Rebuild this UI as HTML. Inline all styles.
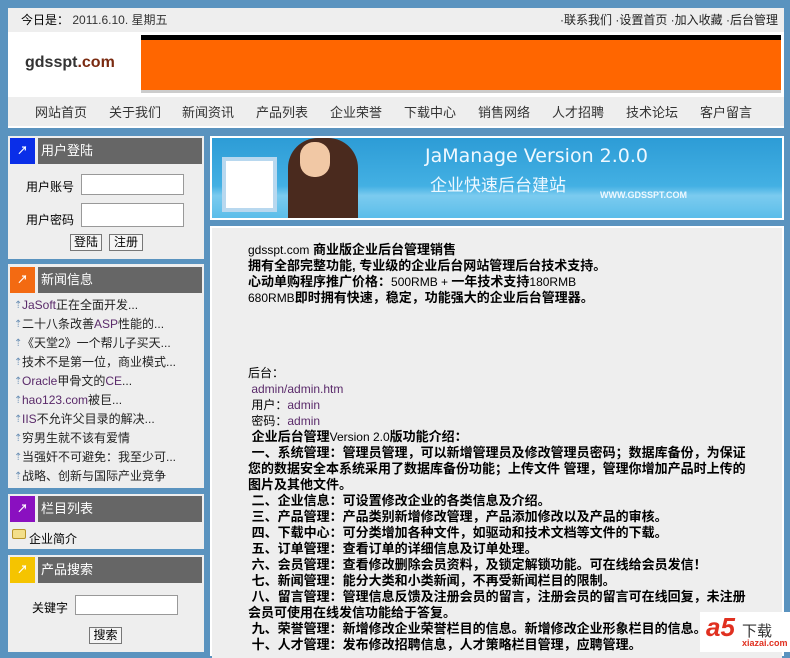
<!DOCTYPE html>
<html><head><meta charset="utf-8"><style>
*{margin:0;padding:0;box-sizing:border-box}
body{width:790px;height:652px;overflow:hidden;background:#5a93bf;font-family:"Liberation Sans","Noto Sans CJK SC",sans-serif;font-size:12px;color:#000;position:relative}
.a{position:absolute}
.panel{background:#eeeeee}
.hd{position:absolute;height:26px;left:2px;right:2px}
.hd .ic{position:absolute;left:0;top:0;width:25px;height:26px;color:#fff;font-size:11px;font-weight:bold;text-align:center;line-height:26px}
.hd .t{position:absolute;left:28px;right:0;top:0;height:26px;background:#666;color:#fff;font-size:13px;line-height:26px;padding-left:3px}
.nav span{position:absolute;top:0;font-size:13px;color:#333}
.news div{height:19px;line-height:19px;padding-left:14px;position:relative;color:#222}
.news div:before{content:"⇡";position:absolute;left:6px;color:#6a8fb5;font-size:10px}
.pu{color:#5a2a6a}
.ct{font-size:13px;line-height:16px;font-weight:bold;position:absolute;left:248px;width:502px}
.n{font-weight:normal;font-size:12px}
input.box{position:absolute;background:#fff;border:1px solid #999;height:21px}
.btn{position:absolute;border:1px solid #777;background:#f5f5f5;font-size:12px;text-align:center;line-height:15px}
</style></head><body>
<div class="a" style="left:8px;top:8px;width:776px;height:120px;background:#fff"></div>
<div class="a" style="left:8px;top:8px;width:776px;height:24px;background:#eeeeee"></div>
<div class="a" style="left:21px;top:11px;font-size:12px">今日是： <span style="color:#333">2011.6.10. 星期五</span></div>
<div class="a" style="left:560px;top:11px;font-size:12px;color:#222">·联系我们 ·设置首页 ·加入收藏 ·后台管理</div>
<div class="a" style="left:25px;top:54px;font-size:16px;font-weight:bold;color:#333">gdsspt<span style="color:#7a2a10">.com</span></div>
<div class="a" style="left:141px;top:35px;width:640px;height:5px;background:#000"></div>
<div class="a" style="left:141px;top:40px;width:640px;height:50px;background:#ff6600"></div>
<div class="a" style="left:141px;top:90px;width:640px;height:3px;background:#ccc"></div>
<div class="a" style="left:8px;top:97px;width:776px;height:29px;background:#eeeeee"></div>
<div class="a nav" style="left:0;top:102px;width:790px;height:20px">
<span style="left:35px">网站首页</span><span style="left:109px">关于我们</span><span style="left:182px">新闻资讯</span><span style="left:256px">产品列表</span><span style="left:330px">企业荣誉</span><span style="left:404px">下载中心</span><span style="left:478px">销售网络</span><span style="left:552px">人才招聘</span><span style="left:626px">技术论坛</span><span style="left:700px">客户留言</span>
</div>
<div class="a panel" style="left:8px;top:136px;width:196px;height:123px">
<div class="hd" style="top:2px"><div class="ic" style="background:#0a2ee8">↗</div><div class="t">用户登陆</div></div>
<div class="a" style="left:18px;top:42px;font-size:12px">用户账号</div>
<input class="box" style="left:73px;top:38px;width:103px">
<div class="a" style="left:18px;top:75px;font-size:12px">用户密码</div>
<input class="box" style="left:73px;top:67px;width:103px;height:24px">
<div class="btn" style="left:62px;top:98px;width:32px;height:17px">登陆</div>
<div class="btn" style="left:101px;top:98px;width:34px;height:17px">注册</div>
</div>
<div class="a panel" style="left:8px;top:264px;width:196px;height:224px">
<div class="hd" style="top:3px"><div class="ic" style="background:#f36a12">↗</div><div class="t">新闻信息</div></div>
<div class="news a" style="left:0;top:32px;width:196px">
<div><span class="pu">JaSoft</span>正在全面开发...</div>
<div>二十八条改善<span class="pu">ASP</span>性能的...</div>
<div>《天堂2》一个帮儿子买天...</div>
<div>技术不是第一位，商业模式...</div>
<div><span class="pu">Oracle</span>甲骨文的<span class="pu">CE</span>...</div>
<div><span class="pu">hao123.com</span>被巨...</div>
<div><span class="pu">IIS</span>不允许父目录的解决...</div>
<div>穷男生就不该有爱情</div>
<div>当强奸不可避免：我至少可...</div>
<div>战略、创新与国际产业竞争</div>
</div></div>
<div class="a panel" style="left:8px;top:494px;width:196px;height:55px">
<div class="hd" style="top:2px"><div class="ic" style="background:#8a10c0">↗</div><div class="t">栏目列表</div></div>
<div class="a" style="left:4px;top:35px;width:14px;height:10px;background:#f3df8a;border:1px solid #b8952a;border-radius:2px"></div>
<div class="a" style="left:21px;top:36px;font-size:12px">企业简介</div>
</div>
<div class="a panel" style="left:8px;top:555px;width:196px;height:97px">
<div class="hd" style="top:2px"><div class="ic" style="background:#f5c400">↗</div><div class="t">产品搜索</div></div>
<div class="a" style="left:24px;top:44px;font-size:12px">关键字</div>
<input class="box" style="left:67px;top:40px;width:103px;height:20px">
<div class="btn" style="left:81px;top:72px;width:33px;height:17px">搜索</div>
</div>
<div class="a" style="left:210px;top:136px;width:574px;height:84px;background:#fff"></div>
<div class="a" style="left:212px;top:138px;width:570px;height:80px;background:linear-gradient(#2d9cd6 0%,#43b0e3 60%,#7bcbef 72%,#5bbde9 100%)"></div>
<div class="a" style="left:222px;top:157px;width:55px;height:55px;background:#fff;border:4px solid #b8d8ef"></div>
<div class="a" style="left:288px;top:138px;width:70px;height:80px;background:#4a2a1e;border-radius:30px 30px 0 0"></div>
<div class="a" style="left:300px;top:142px;width:30px;height:35px;background:#f1c8a5;border-radius:14px"></div>
<div class="a" style="left:425px;top:145px;font-size:19px;color:#eef8ff;font-family:'DejaVu Sans',sans-serif">JaManage Version 2.0.0</div>
<div class="a" style="left:430px;top:171px;font-size:17px;color:#eef8ff">企业快速后台建站</div>
<div class="a" style="left:600px;top:190px;font-size:9px;color:#eef8ff;font-weight:bold">WWW.GDSSPT.COM</div>
<div class="a" style="left:210px;top:226px;width:574px;height:430px;background:#fff"></div>
<div class="a" style="left:212px;top:228px;width:570px;height:430px;background:#eeeeee"></div>
<div class="ct" style="top:242px"><span class="n">gdsspt.com</span> 商业版企业后台管理销售<br>拥有全部完整功能, 专业级的企业后台网站管理后台技术支持。<br>心动单购程序推广价格：<span class="n">500RMB + </span>一年技术支持<span class="n">180RMB</span><br><span class="n">680RMB</span>即时拥有快速，稳定，功能强大的企业后台管理器。</div>
<div class="ct" style="top:365px;left:248px"><span class="n">后台：</span><br><span class="n pu">&nbsp;admin/admin.htm</span><br><span class="n">&nbsp;用户：<span class="pu">admin</span></span><br><span class="n">&nbsp;密码：<span class="pu">admin</span></span><br>&nbsp;企业后台管理<span class="n">Version 2.0</span>版功能介绍：<br>&nbsp;一、系统管理：管理员管理，可以新增管理员及修改管理员密码；数据库备份，为保证您的数据安全本系统采用了数据库备份功能；上传文件 管理，管理你增加产品时上传的图片及其他文件。<br>&nbsp;二、企业信息：可设置修改企业的各类信息及介绍。<br>&nbsp;三、产品管理：产品类别新增修改管理，产品添加修改以及产品的审核。<br>&nbsp;四、下载中心：可分类增加各种文件，如驱动和技术文档等文件的下载。<br>&nbsp;五、订单管理：查看订单的详细信息及订单处理。<br>&nbsp;六、会员管理：查看修改删除会员资料，及锁定解锁功能。可在线给会员发信！<br>&nbsp;七、新闻管理：能分大类和小类新闻，不再受新闻栏目的限制。<br>&nbsp;八、留言管理：管理信息反馈及注册会员的留言，注册会员的留言可在线回复，未注册会员可使用在线发信功能给于答复。<br>&nbsp;九、荣誉管理：新增修改企业荣誉栏目的信息。新增修改企业形象栏目的信息。<br>&nbsp;十、人才管理：发布修改招聘信息，人才策略栏目管理，应聘管理。</div>
<div class="a" style="left:700px;top:612px;width:90px;height:40px;background:#fff"></div>
<div class="a" style="left:706px;top:612px;font-size:26px;font-weight:bold;color:#e03020;font-style:italic">a5</div>
<div class="a" style="left:742px;top:620px;font-size:15px;color:#333">下载</div>
<div class="a" style="left:742px;top:638px;font-size:9px;color:#e03020;font-weight:bold">xiazai.com</div>
</body></html>
